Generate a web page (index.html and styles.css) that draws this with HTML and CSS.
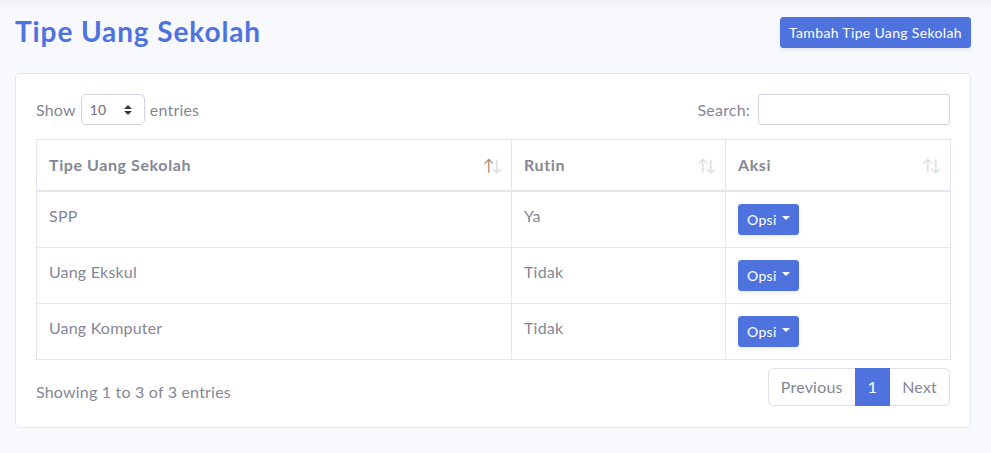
FILE: index.html
```html
<!DOCTYPE html>
<html lang="id">
<head>
<meta charset="utf-8">
<title>Tipe Uang Sekolah</title>
<link rel="stylesheet" href="styles.css">
</head>
<body>
<div class="topshade"></div>
<div class="page">
  <div class="page-head">
    <h1 class="title">Tipe Uang Sekolah</h1>
    <button class="btn btn-primary btn-sm shadow-sm">Tambah Tipe Uang Sekolah</button>
  </div>
  <div class="card">
    <div class="card-body">
      <div class="dt-top">
        <label class="dt-length">Show
          <span class="select">10<svg class="sel-arrows" width="8" height="10" viewBox="0 0 4 5"><path fill="#343a40" d="M2 0L0 2h4zm0 5L0 3h4z"/></svg></span>
          entries</label>
        <label class="dt-filter">Search:<span class="search"></span></label>
      </div>
      <table class="table">
        <colgroup><col class="c1"><col class="c2"><col class="c3"></colgroup>
        <thead>
          <tr>
            <th class="sort asc">Tipe Uang Sekolah<span class="ar up">↑</span><span class="ar dn">↓</span></th>
            <th class="sort">Rutin<span class="ar up">↑</span><span class="ar dn">↓</span></th>
            <th class="sort">Aksi<span class="ar up">↑</span><span class="ar dn">↓</span></th>
          </tr>
        </thead>
        <tbody>
          <tr><td>SPP</td><td>Ya</td><td><button class="btn btn-primary btn-sm shadow-sm opsi">Opsi<span class="caret"></span></button></td></tr>
          <tr><td>Uang Ekskul</td><td>Tidak</td><td><button class="btn btn-primary btn-sm shadow-sm opsi">Opsi<span class="caret"></span></button></td></tr>
          <tr><td>Uang Komputer</td><td>Tidak</td><td><button class="btn btn-primary btn-sm shadow-sm opsi">Opsi<span class="caret"></span></button></td></tr>
        </tbody>
      </table>
      <div class="dt-bottom">
        <div class="dt-info">Showing 1 to 3 of 3 entries</div>
        <ul class="pagination">
          <li class="page-item disabled first"><span class="page-link">Previous</span></li>
          <li class="page-item active"><span class="page-link">1</span></li>
          <li class="page-item disabled last"><span class="page-link">Next</span></li>
        </ul>
      </div>
    </div>
  </div>
</div>
</body>
</html>
```
FILE: styles.css
```css
* { box-sizing: border-box; }
html, body { margin: 0; padding: 0; }
body {
  background: #f8f9fc;
  font-family: Lato, "Noto Sans", sans-serif;
  font-size: 16px;
  line-height: 1.5;
  letter-spacing: 0.2px;
  color: #858796;
  height: 453px;
  overflow: hidden;
  position: relative;
}
.topshade {
  height: 0;
  box-shadow: 0 0 10px 3px rgba(58, 59, 69, 0.08);
}
.page { padding: 15px 20px 0 15px; }
.page-head {
  display: flex;
  align-items: center;
  justify-content: space-between;
  margin-bottom: 24px;
  height: 34px;
}
.title {
  margin: 0;
  font-size: 28px;
  font-weight: 700;
  line-height: 1.2;
  letter-spacing: 0.9px;
  color: #4e73df;
}
.btn {
  font-family: inherit;
  display: inline-block;
  border: 1px solid #4e73df;
  background: #4e73df;
  color: #fff;
  border-radius: 3px;
  cursor: pointer;
}
.btn-sm {
  font-size: 14px;
  line-height: 1.5;
  padding: 4px 8px;
  letter-spacing: 0.35px;
}
.shadow-sm { box-shadow: 0 2px 4px rgba(0, 0, 0, 0.075); }
.card {
  background: #fff;
  border: 1px solid #e3e6f0;
  border-radius: 5px;
}
.card-body { padding: 20px 20px 21px; }
.dt-top {
  display: flex;
  justify-content: space-between;
  align-items: center;
  margin-bottom: 14px;
  height: 31px;
}
.dt-length, .dt-filter {
  display: flex;
  align-items: center;
  white-space: nowrap;
}
.select {
  display: inline-flex;
  align-items: center;
  justify-content: space-between;
  width: 64px;
  height: 31px;
  margin: 0 5px;
  padding: 0 12px 0 8px;
  border: 1px solid #d1d3e2;
  border-radius: 5px;
  font-size: 14px;
  color: #6e707e;
}
.search {
  display: inline-block;
  width: 192px;
  height: 31px;
  margin-left: 8px;
  border: 1px solid #d1d3e2;
  border-radius: 3px;
}
.table {
  width: 914px;
  border-collapse: collapse;
  table-layout: fixed;
  margin: 0 0 6px;
  border: 1px solid #e3e6f0;
}
.c1 { width: 475px; }
.c2 { width: 214px; }
.c3 { width: 225px; }
.table th, .table td {
  border: 1px solid #e3e6f0;
  padding: 12px;
  text-align: left;
  vertical-align: top;
}
.table thead th {
  vertical-align: middle;
  padding: 13px 30px 13px 12px;
  border-bottom: 2px solid #e3e6f0;
  font-weight: 700;
  letter-spacing: 0.6px;
  position: relative;
}
.ar {
  position: absolute;
  top: 13px;
  font-weight: 400;
  opacity: 0.3;
  line-height: 24px;
  letter-spacing: 0;
}
.ar.up { right: 16px; }
.ar.dn { right: 8px; }
.asc .ar.up { opacity: 1; color: #b08d6e; }
.opsi { display: inline-flex; align-items: center; }
.caret {
  display: inline-block;
  margin-left: 5px;
  width: 0;
  height: 0;
  border-top: 4.8px solid #fff;
  border-left: 4.8px solid transparent;
  border-right: 4.8px solid transparent;
  margin-top: -3px;
}
.dt-bottom {
  display: flex;
  justify-content: space-between;
  align-items: flex-start;
}
.dt-info { padding-top: 13.6px; }
.pagination {
  display: flex;
  list-style: none;
  margin: 2px 0 0;
  padding: 0;
}
.page-link {
  display: block;
  padding: 8px 12px;
  line-height: 20px;
  border: 1px solid #dddfeb;
  margin-left: -1px;
  background: #fff;
  color: #858796;
}
.first .page-link { border-radius: 5px 0 0 5px; margin-left: 0; }
.last .page-link { border-radius: 0 5px 5px 0; }
.active .page-link {
  background: #4e73df;
  border-color: #4e73df;
  color: #fff;
  position: relative;
}
```
